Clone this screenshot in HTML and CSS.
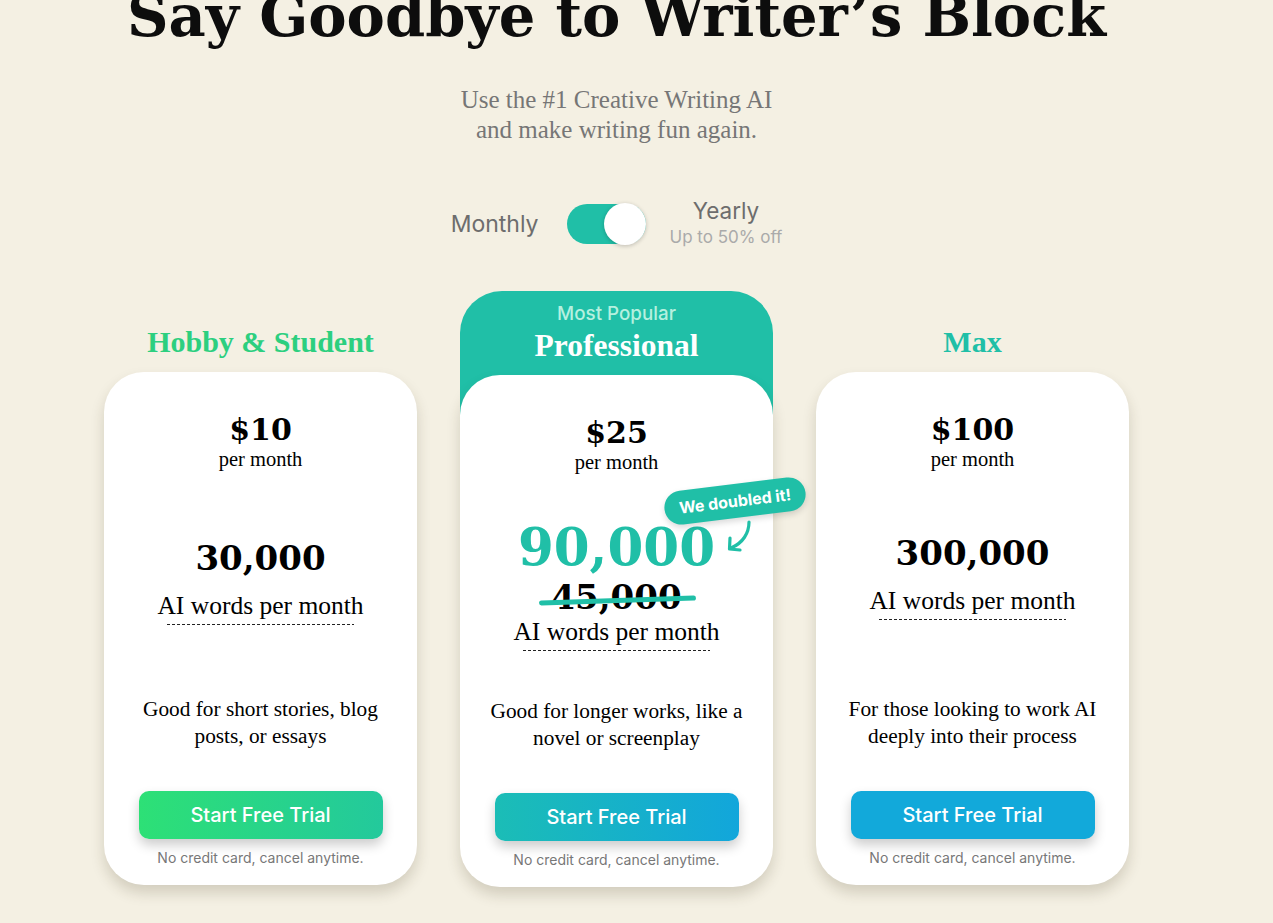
FILE: index.html
```html
<!DOCTYPE html>
<html lang="en">
<head>
<meta charset="utf-8">
<title>Pricing</title>
<link rel="stylesheet" href="styles.css">
</head>
<body>
<main class="page">
  <h1 class="headline">Say Goodbye to Writer’s Block</h1>
  <p class="subtitle">Use the #1 Creative Writing AI<br>and make writing fun again.</p>

  <div class="billing">
    <span class="billing-label">Monthly</span>
    <span class="switch"><span class="knob"></span></span>
    <span class="billing-yearly">
      <span class="yearly">Yearly</span>
      <span class="discount">Up to 50% off</span>
    </span>
  </div>

  <section class="plans">
    <div class="plan">
      <h2 class="plan-title title-green">Hobby &amp; Student</h2>
      <div class="card">
        <div class="price">$10</div>
        <div class="period">per month</div>
        <div class="words">
          <div class="words-count">30,000</div>
          <div class="words-label">AI words per month</div>
        </div>
        <p class="desc">Good for short stories, blog<br>posts, or essays</p>
        <a class="cta cta-green" href="#">Start Free Trial</a>
        <p class="note">No credit card, cancel anytime.</p>
      </div>
    </div>

    <div class="plan">
      <div class="popular-head">
        <span class="popular-tag">Most Popular</span>
        <h2 class="popular-title">Professional</h2>
      </div>
      <div class="card card-popular">
        <div class="price">$25</div>
        <div class="period">per month</div>
        <div class="words words-popular">
          <div class="words-count words-big">90,000</div>
          <div class="words-old"><span class="strike">45,000</span></div>
          <div class="words-label">AI words per month</div>
        </div>
        <p class="desc">Good for longer works, like a<br>novel or screenplay</p>
        <a class="cta cta-teal" href="#">Start Free Trial</a>
        <p class="note">No credit card, cancel anytime.</p>
        <span class="badge">We doubled it!</span>
        <svg class="badge-arrow" width="34" height="44" viewBox="0 0 34 44" aria-hidden="true">
          <path d="M29 7 C 29 18, 23 28, 11 33" fill="none" stroke="#20bfa7" stroke-width="3.2" stroke-linecap="round"/>
          <path d="M10 23 L 9.5 34 L 20 35" fill="none" stroke="#20bfa7" stroke-width="3.2" stroke-linecap="round" stroke-linejoin="round"/>
        </svg>
      </div>
    </div>

    <div class="plan">
      <h2 class="plan-title title-teal">Max</h2>
      <div class="card">
        <div class="price">$100</div>
        <div class="period">per month</div>
        <div class="words words-max">
          <div class="words-count">300,000</div>
          <div class="words-label">AI words per month</div>
        </div>
        <p class="desc">For those looking to work AI<br>deeply into their process</p>
        <a class="cta cta-blue" href="#">Start Free Trial</a>
        <p class="note">No credit card, cancel anytime.</p>
      </div>
    </div>
  </section>
</main>
</body>
</html>
```
FILE: styles.css
```css
* { box-sizing: border-box; }

html, body {
  margin: 0;
  padding: 0;
  background: #f4f0e3;
  overflow: hidden;
}

.page {
  width: 1233px;
  height: 923px;
  display: flex;
  flex-direction: column;
  align-items: center;
}

.headline {
  margin: -16px 0 0;
  font-family: "DejaVu Serif", serif;
  font-weight: 700;
  font-size: 57.5px;
  line-height: 64px;
  color: #0d0d0d;
  white-space: nowrap;
}

.subtitle {
  margin: 37px 0 0;
  font-family: "Liberation Serif", serif;
  font-size: 25px;
  line-height: 30px;
  color: #767676;
  text-align: center;
}

.billing {
  margin-top: 53px;
  display: flex;
  align-items: center;
  font-family: Inter, "Noto Sans", sans-serif;
}

.billing-label {
  font-size: 23px;
  color: #6d6d6d;
  margin-right: 28px;
}

.switch {
  position: relative;
  width: 79px;
  height: 40px;
  border-radius: 20px;
  background: #20bfa7;
  margin-right: 24px;
}

.knob {
  position: absolute;
  right: 0;
  top: -1px;
  width: 42px;
  height: 42px;
  border-radius: 50%;
  background: #fff;
  box-shadow: 0 1px 4px rgba(0, 0, 0, 0.22);
}

.billing-yearly {
  display: flex;
  flex-direction: column;
  align-items: center;
}

.yearly {
  font-size: 22.5px;
  line-height: 26px;
  color: #6d6d6d;
}

.discount {
  font-size: 17px;
  line-height: 26px;
  color: #aaaaaa;
}

.plans {
  margin-top: 41px;
  display: flex;
  gap: 43px;
  align-items: flex-start;
}

.plan {
  width: 313px;
  display: flex;
  flex-direction: column;
}

.plan-title {
  margin: 0;
  height: 81px;
  padding-bottom: 12px;
  display: flex;
  align-items: flex-end;
  justify-content: center;
  font-family: "Liberation Serif", serif;
  font-weight: 700;
  font-size: 30px;
  line-height: 36px;
}

.title-green {
  color: #2ccf7f;
}

.title-teal {
  color: #20bfa7;
}

.popular-head {
  background: #20bfa7;
  border-radius: 42px 42px 0 0;
  padding: 12px 0 51px;
  display: flex;
  flex-direction: column;
  align-items: center;
}

.popular-tag {
  font-family: Inter, "Noto Sans", sans-serif;
  font-weight: 500;
  font-size: 18.8px;
  line-height: 22px;
  color: #b5f0df;
}

.popular-title {
  margin: 3px 0 0;
  font-family: "Liberation Serif", serif;
  font-weight: 700;
  font-size: 31.5px;
  line-height: 36px;
  color: #ffffff;
}

.card {
  position: relative;
  height: 513px;
  padding: 40px 0 19px;
  background: #ffffff;
  border-radius: 40px;
  box-shadow: 0 8px 14px rgba(60, 50, 20, 0.18);
  display: flex;
  flex-direction: column;
  align-items: center;
}

.card-popular {
  margin-top: -40px;
  height: 512px;
}

.price {
  font-family: "DejaVu Serif", serif;
  font-weight: 700;
  font-size: 30px;
  line-height: 36px;
  color: #000;
}

.period {
  font-family: "Liberation Serif", serif;
  font-size: 20.5px;
  line-height: 22px;
  color: #000;
}

.words {
  flex: 1;
  padding-bottom: 5px;
  display: flex;
  flex-direction: column;
  justify-content: center;
  align-items: center;
}

.words-popular {
  padding: 0 0 1px;
}

.words-max {
  padding-bottom: 16px;
}

.words-count {
  font-family: "DejaVu Serif", serif;
  font-weight: 700;
  font-size: 34px;
  line-height: 44px;
  color: #000;
  margin-bottom: 12px;
}

.words-big {
  font-size: 51.5px;
  line-height: 56px;
  color: #20bfa7;
  margin-bottom: 2px;
}

.words-old {
  font-family: "DejaVu Serif", serif;
  font-weight: 700;
  font-size: 34px;
  line-height: 40px;
  color: #000;
  margin-bottom: 1px;
}

.strike {
  position: relative;
  display: inline-block;
}

.strike::after {
  content: "";
  position: absolute;
  left: -12px;
  right: -15px;
  top: 21px;
  height: 5px;
  border-radius: 3px;
  background: #20bfa7;
  transform: rotate(-1.8deg);
}

.words-label {
  font-family: "Liberation Serif", serif;
  font-size: 25.5px;
  line-height: 28px;
  color: #000;
}

.words-label::after {
  content: "";
  display: block;
  height: 1px;
  margin: 4px 10px 0;
  background: repeating-linear-gradient(90deg, #222 0 3px, transparent 3px 5px);
}

.desc {
  margin: 0;
  font-family: "Liberation Serif", serif;
  font-size: 21.3px;
  line-height: 27px;
  color: #000;
  text-align: center;
  white-space: nowrap;
}

.cta {
  margin-top: 41px;
  width: 244px;
  height: 48px;
  border-radius: 10px;
  display: flex;
  align-items: center;
  justify-content: center;
  font-family: Inter, "Noto Sans", sans-serif;
  font-weight: 500;
  font-size: 20px;
  color: #ffffff;
  text-decoration: none;
  box-shadow: 0 6px 12px rgba(0, 0, 0, 0.2);
}

.cta-green {
  background: linear-gradient(90deg, #2de076, #23c99c);
}

.cta-teal {
  background: linear-gradient(90deg, #1bbdb6, #12a6db);
}

.cta-blue {
  background: #12a9da;
}

.note {
  margin: 11px 0 0;
  font-family: Inter, "Noto Sans", sans-serif;
  font-size: 14px;
  line-height: 16px;
  color: #777777;
}

.badge {
  position: absolute;
  left: 204px;
  top: 109px;
  width: 142px;
  height: 34px;
  border-radius: 17px;
  background: #20bfa7;
  color: #fff;
  font-family: Inter, "Noto Sans", sans-serif;
  font-weight: 700;
  font-size: 16px;
  display: flex;
  align-items: center;
  justify-content: center;
  transform: rotate(-7deg);
  box-shadow: 0 3px 6px rgba(0, 0, 0, 0.15);
}

.badge-arrow {
  position: absolute;
  left: 260px;
  top: 140px;
}
```
